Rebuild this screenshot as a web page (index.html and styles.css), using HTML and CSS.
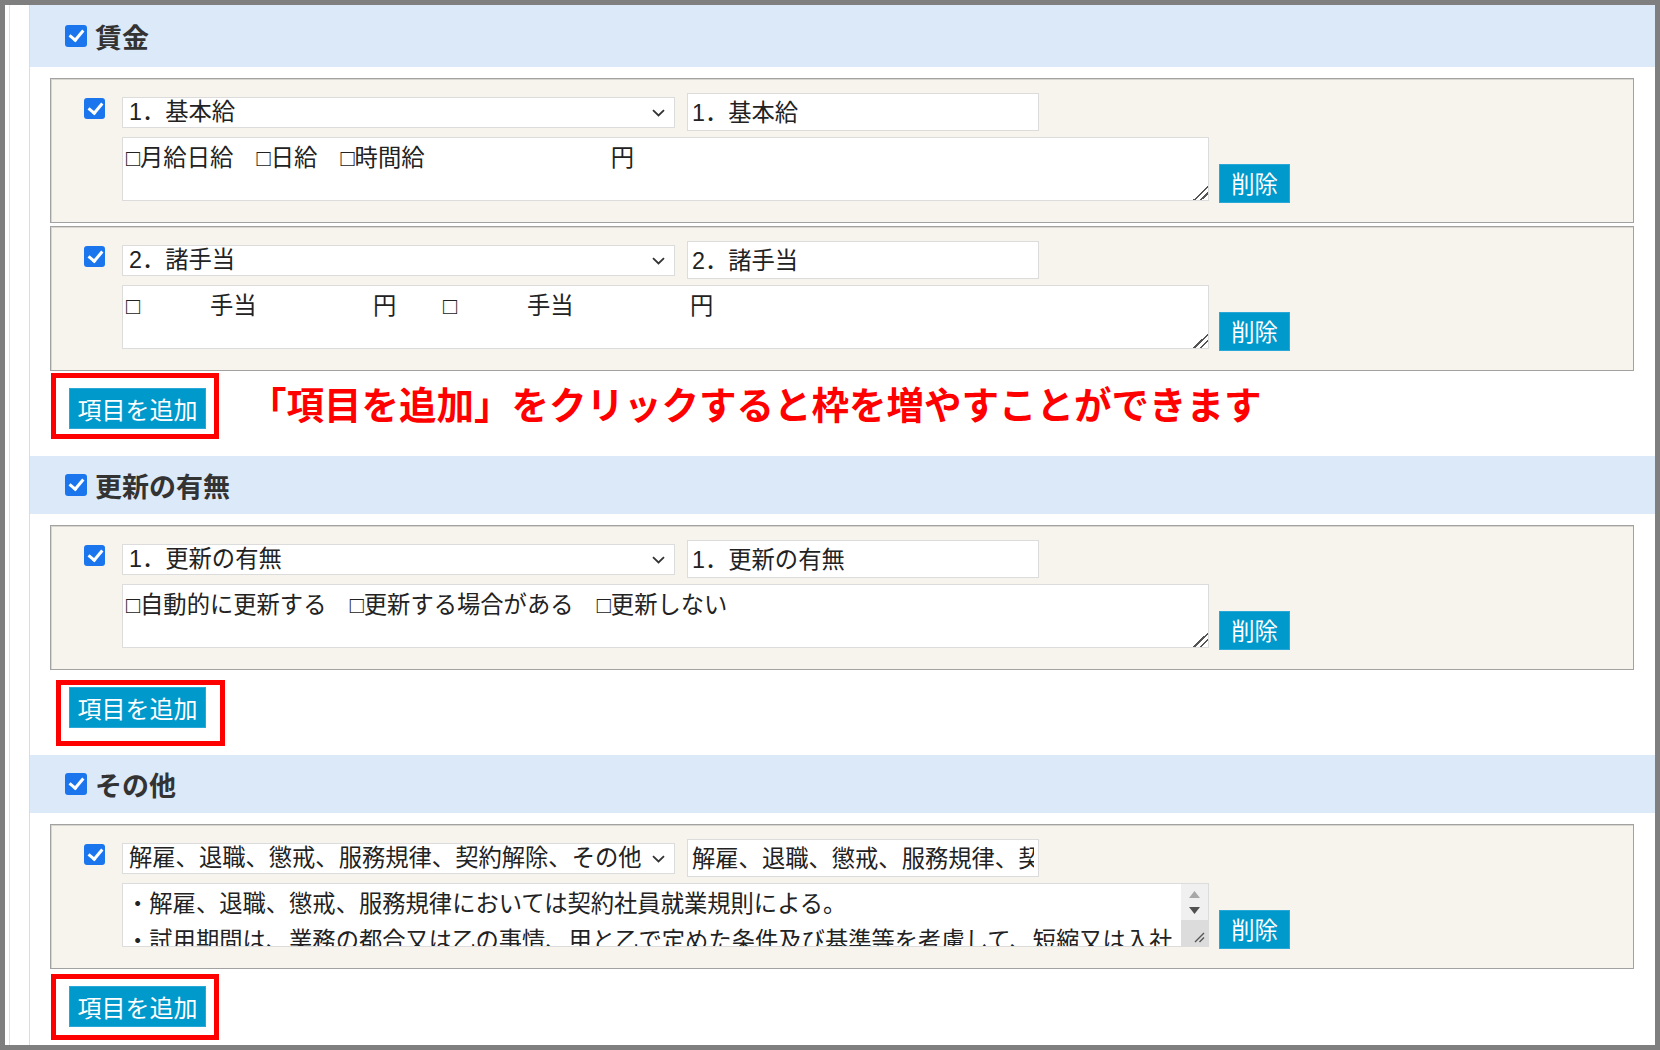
FILE: index.html
```html
<!DOCTYPE html>
<html lang="ja">
<head>
    <meta charset="UTF-8">
    <title>労働条件 項目設定</title>
    <link rel="stylesheet" href="styles.css">
</head>
<body>
    <div class="frame">
        <div class="page">
            <div class="panel">

                <section class="section">
                    <div class="section-head">
                        <input type="checkbox" class="check check-lg" checked>
                        <h2>賃金</h2>
                    </div>
                    <div class="section-body">
                        <div class="item">
                            <input type="checkbox" class="check" checked>
                            <div class="item-main">
                                <div class="item-top">
                                    <div class="select-wrap">
                                        <select class="field-select"><option>1．基本給</option></select>
                                        <svg class="chev" width="13" height="8" viewBox="0 0 13 8"><path d="M1 1.2 L6.5 6.5 L12 1.2" fill="none" stroke="#333" stroke-width="1.8"/></svg>
                                    </div>
                                    <input type="text" class="field-input" value="1．基本給">
                                </div>
                                <div class="item-bottom">
                                    <textarea class="memo">□月給日給　□日給　□時間給　　　　　　　　円</textarea>
                                    <button class="btn btn-del">削除</button>
                                </div>
                            </div>
                        </div>
                        <div class="item">
                            <input type="checkbox" class="check" checked>
                            <div class="item-main">
                                <div class="item-top">
                                    <div class="select-wrap">
                                        <select class="field-select"><option>2．諸手当</option></select>
                                        <svg class="chev" width="13" height="8" viewBox="0 0 13 8"><path d="M1 1.2 L6.5 6.5 L12 1.2" fill="none" stroke="#333" stroke-width="1.8"/></svg>
                                    </div>
                                    <input type="text" class="field-input" value="2．諸手当">
                                </div>
                                <div class="item-bottom">
                                    <textarea class="memo">□　　　手当　　　　　円　　□　　　手当　　　　　円</textarea>
                                    <button class="btn btn-del">削除</button>
                                </div>
                            </div>
                        </div>
                        <div class="add-row">
                            <button class="btn btn-add">項目を追加</button>
                            <span class="mark mark-1"></span>
                            <p class="note">「項目を追加」をクリックすると枠を増やすことができます</p>
                        </div>
                    </div>
                </section>

                <section class="section">
                    <div class="section-head">
                        <input type="checkbox" class="check check-lg" checked>
                        <h2>更新の有無</h2>
                    </div>
                    <div class="section-body">
                        <div class="item">
                            <input type="checkbox" class="check" checked>
                            <div class="item-main">
                                <div class="item-top">
                                    <div class="select-wrap">
                                        <select class="field-select"><option>1．更新の有無</option></select>
                                        <svg class="chev" width="13" height="8" viewBox="0 0 13 8"><path d="M1 1.2 L6.5 6.5 L12 1.2" fill="none" stroke="#333" stroke-width="1.8"/></svg>
                                    </div>
                                    <input type="text" class="field-input" value="1．更新の有無">
                                </div>
                                <div class="item-bottom">
                                    <textarea class="memo">□自動的に更新する　□更新する場合がある　□更新しない</textarea>
                                    <button class="btn btn-del">削除</button>
                                </div>
                            </div>
                        </div>
                        <div class="add-row">
                            <button class="btn btn-add">項目を追加</button>
                            <span class="mark mark-2"></span>
                        </div>
                    </div>
                </section>

                <section class="section">
                    <div class="section-head">
                        <input type="checkbox" class="check check-lg" checked>
                        <h2>その他</h2>
                    </div>
                    <div class="section-body">
                        <div class="item">
                            <input type="checkbox" class="check" checked>
                            <div class="item-main">
                                <div class="item-top">
                                    <div class="select-wrap">
                                        <select class="field-select"><option>解雇、退職、懲戒、服務規律、契約解除、その他</option></select>
                                        <svg class="chev" width="13" height="8" viewBox="0 0 13 8"><path d="M1 1.2 L6.5 6.5 L12 1.2" fill="none" stroke="#333" stroke-width="1.8"/></svg>
                                    </div>
                                    <input type="text" class="field-input" value="解雇、退職、懲戒、服務規律、契約解除、その他">
                                </div>
                                <div class="item-bottom">
                                    <div class="memo-wrap">
                                        <textarea class="memo memo-long">・解雇、退職、懲戒、服務規律においては契約社員就業規則による。
・試用期間は、業務の都合又は乙の事情、甲と乙で定めた条件及び基準等を考慮して、短縮又は入社後の期間を延長することがある。</textarea>
                                        <div class="scrollbar">
                                            <div class="sb-arrows">
                                                <svg width="11" height="7" viewBox="0 0 11 7"><path d="M0 7 L5.5 0 L11 7 Z" fill="#a8a8a8"/></svg>
                                                <svg width="11" height="7" viewBox="0 0 11 7"><path d="M0 0 L5.5 7 L11 0 Z" fill="#505050"/></svg>
                                            </div>
                                            <div class="sb-corner">
                                                <svg width="13" height="13" viewBox="0 0 13 13"><path d="M12 3 L3 12 M12 7.5 L7.5 12" stroke="#555" stroke-width="1.4"/></svg>
                                            </div>
                                        </div>
                                    </div>
                                    <button class="btn btn-del">削除</button>
                                </div>
                            </div>
                        </div>
                        <div class="add-row">
                            <button class="btn btn-add">項目を追加</button>
                            <span class="mark mark-3"></span>
                        </div>
                    </div>
                </section>

            </div>
        </div>
    </div>
</body>
</html>
```

FILE: styles.css
```css
* {
    box-sizing: border-box;
}

body {
    margin: 0;
    background-color: #fff;
    font-family: "Noto Sans CJK JP", sans-serif;
    color: #222;
}

.frame {
    display: flex;
    width: 1660px;
    height: 1050px;
    border: 5px solid #7f7f7f;
    padding-left: 4px;
    overflow: hidden;
    background-color: #fff;
}

.page {
    flex: 1;
    border-left: 1px solid #d5e3f3;
    padding-left: 19px;
}

.panel {
    height: 100%;
    border-left: 1px solid #cfdff2;
}

.section-head {
    display: flex;
    align-items: center;
    height: 58px;
    padding-left: 35px;
    background-color: #dbe9f8;
}

.section:first-child .section-head {
    height: 62px;
}

.section-head h2 {
    margin: 0 0 0 8px;
    font-size: 27px;
    font-weight: bold;
    color: #333;
    line-height: 1;
}

.section-body {
    margin-top: 11px;
    padding: 0 21px 27px 20px;
}

/* checkbox */
.check {
    appearance: none;
    -webkit-appearance: none;
    position: relative;
    flex: none;
    width: 21px;
    height: 21px;
    margin: 5px 0 0 0;
    border-radius: 3px;
    background-color: #1b76ee;
}

.check::after {
    content: "";
    position: absolute;
    left: 7px;
    top: 2px;
    width: 6px;
    height: 11px;
    border: solid #fff;
    border-width: 0 3px 3px 0;
    transform: rotate(40deg);
}

.check-lg {
    width: 22px;
    height: 22px;
    margin: 0;
}

/* item box */
.item {
    display: flex;
    gap: 17px;
    padding: 14px 20px 19px 33px;
    border: 1px solid #a2a2a2;
    background-color: #f7f4ee;
    box-shadow: inset 1px 1px 0 #d9d6d0;
}

.item + .item {
    margin-top: 3px;
}

.item-main {
    flex: 1;
}

.item-top {
    display: flex;
    align-items: center;
    gap: 12px;
}

.select-wrap {
    position: relative;
}

.field-select,
.field-input,
.memo {
    font-family: "Liberation Sans", "Noto Sans CJK JP", sans-serif;
    font-size: 23.3px;
    color: #222;
    background-color: #fff;
    border: 1px solid #dcdcdc;
    border-radius: 0;
    outline: none;
}

.field-select {
    appearance: none;
    -webkit-appearance: none;
    display: block;
    width: 553px;
    height: 31px;
    padding: 0 22px 0 6px;
    line-height: 29px;
}

.chev {
    position: absolute;
    right: 10px;
    top: 12px;
    pointer-events: none;
}

.field-input {
    width: 352px;
    height: 38px;
    padding: 0 4px 2px;
}

.item-bottom {
    display: flex;
    align-items: flex-end;
    gap: 10px;
    margin-top: 6px;
}

.memo {
    display: block;
    width: 1087px;
    height: 64px;
    margin-bottom: 2px;
    padding: 2px 3px 0;
    line-height: 1.6;
    resize: both;
}

.memo::-webkit-resizer {
    background: linear-gradient(135deg, transparent 50%, #555 50%, #555 58%, transparent 58%, transparent 72%, #555 72%, #555 80%, transparent 80%);
}

.memo-wrap {
    position: relative;
    margin-bottom: 2px;
}

.memo-long {
    margin-bottom: 0;
    padding-right: 30px;
    overflow: hidden;
    resize: none;
}

.scrollbar {
    position: absolute;
    top: 1px;
    right: 1px;
    bottom: 1px;
    width: 27px;
    display: flex;
    flex-direction: column;
}

.sb-arrows {
    display: flex;
    flex-direction: column;
    align-items: center;
    justify-content: space-around;
    height: 36px;
    padding: 2px 0;
    background-color: #f0f0f0;
}

.sb-corner {
    flex: 1;
    display: flex;
    align-items: flex-end;
    justify-content: flex-end;
    padding: 0 3px 3px 0;
    background-color: #dcdcdc;
}

/* buttons */
.btn {
    font-family: "Noto Sans CJK JP", sans-serif;
    color: #fff;
    background-color: #0099cc;
    border: 1px solid #2aa8d8;
    border-radius: 0;
    padding: 0;
    line-height: 1;
}

.btn-del {
    flex: none;
    width: 71px;
    height: 39px;
    font-size: 23.3px;
}

.btn-add {
    flex: none;
    width: 137px;
    height: 41px;
    font-size: 24px;
}

.add-row {
    position: relative;
    display: flex;
    align-items: center;
    height: 41px;
    margin-top: 17px;
    padding-left: 19px;
}

.mark {
    position: absolute;
    border: 5px solid #ff0000;
    width: 168px;
    height: 66px;
}

.mark-1 {
    left: 1px;
    top: -15px;
}

.mark-2 {
    left: 6px;
    top: -7px;
    width: 169px;
}

.mark-3 {
    left: 1px;
    top: -12px;
}

.note {
    margin: 0 0 13px 43px;
    font-size: 37.5px;
    font-weight: bold;
    color: #ff0000;
    line-height: 1.2;
    white-space: nowrap;
}
```
